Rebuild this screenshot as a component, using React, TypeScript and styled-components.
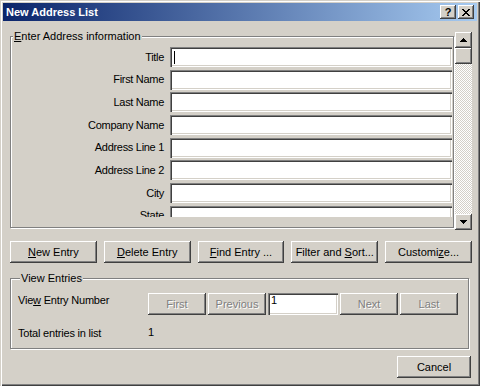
import React from 'react';
import styled, { createGlobalStyle, css } from 'styled-components';

const FACE = '#d4d0c8';

const Global = createGlobalStyle`
  html, body { margin: 0; padding: 0; background: ${FACE}; }
  body { font-family: "Liberation Sans", Arial, sans-serif; font-size: 11px; color: #000; }
  * { box-sizing: border-box; }
`;

const raised = css`
  background: ${FACE};
  box-shadow: inset -1px -1px #404040, inset 1px 1px #fff, inset -2px -2px #808080, inset 2px 2px ${FACE};
`;

const sunken = css`
  background: #fff;
  box-shadow: inset 1px 1px #808080, inset 2px 2px #404040, inset -1px -1px #fff, inset -2px -2px ${FACE};
`;

const etched = css`
  border: 1px solid #808080;
  box-shadow: inset 1px 1px #fff, 1px 1px #fff;
`;

const Window = styled.div`
  width: 480px;
  height: 386px;
  padding: 3px;
  display: flex;
  flex-direction: column;
  background: ${FACE};
  box-shadow: inset 1px 1px ${FACE}, inset 2px 2px #fff, inset -1px -1px #404040, inset -2px -2px #808080;
`;

const TitleBar = styled.div`
  height: 18px;
  flex: none;
  display: flex;
  align-items: center;
  padding: 0 3px;
  background: linear-gradient(to right, #0a246a, #a6caf0);
  color: #fff;
  font-weight: bold;
  font-size: 11px;
  line-height: 13px;
`;

const TitleText = styled.span`
  flex: 1;
  white-space: nowrap;
`;

const CaptionButton = styled.div<{ $gap?: number }>`
  ${raised};
  width: 16px;
  height: 14px;
  margin-left: ${p => p.$gap ?? 0}px;
  display: flex;
  align-items: center;
  justify-content: center;
  color: #000;
  font-weight: bold;
  font-size: 11px;
  line-height: 14px;
`;

const Body = styled.div`
  flex: 1;
  display: flex;
  flex-direction: column;
  padding: 9px 5px 0 7px;
`;

const Pane = styled.div`
  display: flex;
  align-items: flex-start;
  height: 199px;
  flex: none;
`;

const Group = styled.div`
  ${etched};
  display: flex;
  flex-direction: column;
`;

const AddressGroup = styled(Group)`
  width: 444px;
  margin-top: 6px;
  padding: 0 1px 10px 0;
`;

const GroupLabel = styled.div`
  align-self: flex-start;
  margin: -7px 0 0 2px;
  padding: 0 1px;
  height: 13px;
  line-height: 13px;
  background: ${FACE};
  white-space: nowrap;
`;

const Clip = styled.div`
  margin-top: 4px;
  height: 170px;
  overflow: hidden;
`;

const Fields = styled.div`
  display: grid;
  grid-template-columns: 1fr 282px;
  grid-auto-rows: 20px;
  column-gap: 6px;
  row-gap: 2.7px;
  align-items: center;
`;

const FieldLabel = styled.label`
  text-align: right;
  white-space: nowrap;
  line-height: 13px;
  letter-spacing: -0.3px;
`;

const TextBox = styled.div`
  ${sunken};
  height: 20px;
  display: flex;
  align-items: center;
`;

const Caret = styled.span`
  width: 1px;
  height: 13px;
  margin-left: 4px;
  background: #000;
`;

const ScrollBar = styled.div`
  width: 17px;
  height: 198px;
  margin: 2px 0 0 1px;
  display: flex;
  flex-direction: column;
  background-color: #fff;
  background-image: conic-gradient(${FACE} 25%, #fff 0 50%, ${FACE} 0 75%, #fff 0);
  background-size: 2px 2px;
`;

const ScrollButton = styled.div`
  ${raised};
  height: 16px;
  flex: none;
  display: flex;
  align-items: center;
  justify-content: center;
`;

const ScrollSpacer = styled.div`
  flex: 1;
`;

const ButtonRow = styled.div`
  margin-top: 12px;
  display: flex;
  gap: 7px;
`;

const Button = styled.div<{ $disabled?: boolean; $width?: number }>`
  ${raised};
  height: 22px;
  ${p => (p.$width ? `width: ${p.$width}px; flex: none;` : 'flex: 1;')}
  display: flex;
  align-items: center;
  justify-content: center;
  line-height: 13px;
  white-space: nowrap;
  color: ${p => (p.$disabled ? '#808080' : '#000')};
  text-shadow: ${p => (p.$disabled ? '1px 1px #fff' : 'none')};
`;

const Caption = styled.span`
  white-space: pre;
`;

const ViewGroup = styled(Group)`
  margin: 15px 3px 0 0;
  padding: 0 0 8px 7px;
`;

const NavRow = styled.div`
  margin-top: 8px;
  display: flex;
  align-items: flex-start;
`;

const RowLabel = styled.div`
  width: 130px;
  flex: none;
  line-height: 13px;
  margin-top: 1px;
  white-space: nowrap;
  letter-spacing: -0.2px;
`;

const NavButtons = styled.div`
  display: flex;
  gap: 2px;
`;

const NumberBox = styled.div`
  ${sunken};
  width: 70px;
  height: 22px;
  padding: 1px 3px;
  line-height: 13px;
  color: #000;
`;

const TotalRow = styled.div`
  margin-top: 11px;
  display: flex;
  line-height: 13px;
`;

const Footer = styled.div`
  margin-top: 7px;
  display: flex;
  justify-content: flex-end;
  padding-right: 1px;
`;

const fields = ['Title', 'First Name', 'Last Name', 'Company Name', 'Address Line 1', 'Address Line 2', 'City', 'State'];

const UpArrow = () => (
  <svg width="7" height="4" viewBox="0 0 7 4">
    <path d="M3 0h1v1h1v1h1v1h1v1H0V3h1V2h1V1h1z" fill="#000" />
  </svg>
);

const DownArrow = () => (
  <svg width="7" height="4" viewBox="0 0 7 4">
    <path d="M0 0h7v1H6v1H5v1H4v1H3V3H2V2H1V1H0z" fill="#000" />
  </svg>
);

const CloseGlyph = () => (
  <svg width="8" height="7" viewBox="0 0 8 7">
    <path
      d="M0 0h2v1h1v1h2V1h1V0h2v1H7v1H6v1H5v1h1v1h1v1h1v1H6V6H5V5H3v1H2v1H0V6h1V5h1V4h1V3H2V2H1V1H0z"
      fill="#000"
    />
  </svg>
);

export default function App() {
  return (
    <>
      <Global />
      <Window>
        <TitleBar>
          <TitleText>New Address List</TitleText>
          <CaptionButton>?</CaptionButton>
          <CaptionButton $gap={2}>
            <CloseGlyph />
          </CaptionButton>
        </TitleBar>
        <Body>
          <Pane>
            <AddressGroup>
              <GroupLabel>
                <u>E</u>nter Address information
              </GroupLabel>
              <Clip>
                <Fields>
                  {fields.map((f, i) => (
                    <React.Fragment key={f}>
                      <FieldLabel>{f}</FieldLabel>
                      <TextBox>{i === 0 && <Caret />}</TextBox>
                    </React.Fragment>
                  ))}
                </Fields>
              </Clip>
            </AddressGroup>
            <ScrollBar>
              <ScrollButton>
                <UpArrow />
              </ScrollButton>
              <ScrollButton />
              <ScrollSpacer />
              <ScrollButton>
                <DownArrow />
              </ScrollButton>
            </ScrollBar>
          </Pane>
          <ButtonRow>
            <Button>
              <Caption><u>N</u>ew Entry</Caption>
            </Button>
            <Button>
              <Caption><u>D</u>elete Entry</Caption>
            </Button>
            <Button>
              <Caption><u>F</u>ind Entry ...</Caption>
            </Button>
            <Button>
              <Caption>Filter and <u>S</u>ort...</Caption>
            </Button>
            <Button>
              <Caption>Customi<u>z</u>e...</Caption>
            </Button>
          </ButtonRow>
          <ViewGroup>
            <GroupLabel>View Entries</GroupLabel>
            <NavRow>
              <RowLabel>
                Vie<u>w</u> Entry Number
              </RowLabel>
              <NavButtons>
                <Button $disabled $width={58}>First</Button>
                <Button $disabled $width={58}>Previous</Button>
                <NumberBox>1</NumberBox>
                <Button $disabled $width={58}>Next</Button>
                <Button $disabled $width={58}>Last</Button>
              </NavButtons>
            </NavRow>
            <TotalRow>
              <RowLabel>Total entries in list</RowLabel>
              <span>1</span>
            </TotalRow>
          </ViewGroup>
          <Footer>
            <Button $width={74}>Cancel</Button>
          </Footer>
        </Body>
      </Window>
    </>
  );
}
